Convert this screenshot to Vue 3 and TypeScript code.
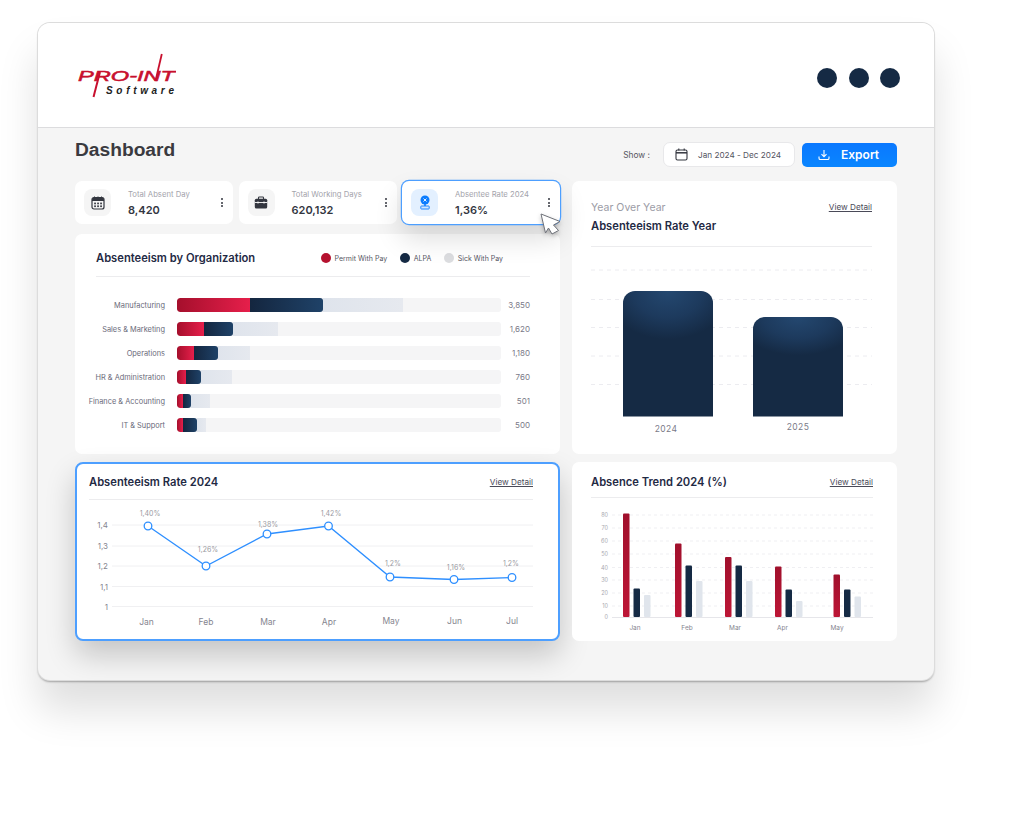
<template>
  <div class="page">
    <div class="window">
      <header class="topbar">
        <svg class="logo" width="100" height="46" viewBox="76 53 100 46" aria-label="PRO-INT Software">
          <text class="logo-main" x="78" y="81" textLength="97" lengthAdjust="spacingAndGlyphs">PRO-INT</text>
          <path d="M100 72 L93.500 97" stroke="#c8102e" stroke-width="2" fill="none" />
          <path d="M161.800 54 L155.500 81" stroke="#c8102e" stroke-width="1.800" fill="none" />
          <text class="logo-sub" x="106" y="94" textLength="68">Software</text>
        </svg>
        <div class="top-dots">
          <span v-for="d in 3" :key="d" class="top-dot" />
        </div>
      </header>

      <main class="content">
        <div class="page-head">
          <h1 class="page-title">Dashboard</h1>
          <div class="filters">
            <span class="show-label">Show :</span>
            <div class="date-box">
              <svg width="13" height="13" viewBox="0 0 13 13" fill="none" stroke="#33363f" stroke-width="1.100">
                <rect x="1" y="2" width="11" height="10" rx="1.500" />
                <path d="M1 4.800 H12" stroke-width="1.500" />
                <path d="M3.800 .5 V2.500 M9.200 .5 V2.500" />
              </svg>
              <span>Jan 2024 - Dec 2024</span>
            </div>
            <button class="export-btn" type="button">
              <svg width="12" height="12" viewBox="0 0 12 12" fill="none" stroke="#fff" stroke-width="1.100">
                <path d="M6 1 V7.500 M3.500 5.200 L6 7.800 L8.500 5.200" />
                <path d="M1 7.500 V9.200 Q1 10.500 2.300 10.500 H9.700 Q11 10.500 11 9.200 V7.500" />
              </svg>
              <span>Export</span>
            </button>
          </div>
        </div>

        <div class="grid">
          <div class="col-left">
            <div class="stats">
              <div v-for="s in stats" :key="s.title" class="stat" :class="{ active: s.active }">
                <div class="stat-icon">
                  <svg v-if="s.icon === 'calendar'" width="14" height="14" viewBox="0 0 14 14">
                    <rect x="1" y="1.500" width="12" height="11.500" rx="2" fill="none" stroke="#33363f" stroke-width="1.200" />
                    <path d="M1 3.500 Q1 1.500 3 1.500 H11 Q13 1.500 13 3.500 V5 H1 Z" fill="#33363f" />
                    <path d="M3.500 .5 V2 M7 .5 V2 M10.500 .5 V2" stroke="#33363f" stroke-width="1" />
                    <g fill="#33363f">
                      <rect x="3.200" y="6.600" width="1.700" height="1.700" />
                      <rect x="6.200" y="6.600" width="1.700" height="1.700" />
                      <rect x="9.200" y="6.600" width="1.700" height="1.700" />
                      <rect x="3.200" y="9.400" width="1.700" height="1.700" />
                      <rect x="6.200" y="9.400" width="1.700" height="1.700" />
                      <rect x="9.200" y="9.400" width="1.700" height="1.700" />
                    </g>
                  </svg>
                  <svg v-else-if="s.icon === 'briefcase'" width="14" height="14" viewBox="0 0 14 14">
                    <path d="M4.500 3 V1.800 Q4.500 1 5.300 1 H8.700 Q9.500 1 9.500 1.800 V3" fill="none" stroke="#33363f" stroke-width="1.100" />
                    <rect x=".8" y="2.800" width="12.400" height="9.700" rx="1.500" fill="#33363f" />
                    <path d="M.8 6.500 H13.200" stroke="#fff" stroke-width=".9" />
                    <path d="M4 5.500 V7.500 M10 5.500 V7.500" stroke="#fff" stroke-width="1" />
                  </svg>
                  <svg v-else width="14" height="16" viewBox="0 0 14 16">
                    <circle cx="7" cy="5" r="4.500" fill="#0a7cff" />
                    <path d="M5.500 3.500 L8.500 6.500 M8.500 3.500 L5.500 6.500" stroke="#fff" stroke-width=".9" />
                    <path d="M7 9 V11" stroke="#0a7cff" stroke-width="1.500" />
                    <rect x="2.800" y="11" width="8.400" height="3" rx=".6" fill="#d4e8ff" stroke="#0a7cff" stroke-width=".9" />
                  </svg>
                </div>
                <div class="stat-text">
                  <span class="stat-title">{{ s.title }}</span>
                  <span class="stat-value">{{ s.value }}</span>
                </div>
                <span class="kebab"><i /><i /><i /></span>
                <svg v-if="s.active" class="cursor" width="24" height="26" viewBox="0 0 24 26">
                  <path d="M1 1 L20 8.500 L13.500 12 L18.500 17.500 L12 21 L8.500 15 L5.500 20 Z" fill="#fff" stroke="#6d7078" stroke-width="1" stroke-linejoin="round" />
                </svg>
              </div>
            </div>

            <section class="card org-card">
              <div class="org-head">
                <h2 class="card-title">Absenteeism by Organization</h2>
                <ul class="legend">
                  <li v-for="l in legend" :key="l.label">
                    <span class="legend-dot" :style="{ background: l.color }" />{{ l.label }}
                  </li>
                </ul>
              </div>
              <div class="org-rows">
                <div v-for="r in orgRows" :key="r.name" class="org-row">
                  <span class="org-name">{{ r.name }}</span>
                  <div class="track">
                    <span class="seg seg-red" :style="{ width: segWidth(r.red) }" />
                    <span class="seg seg-navy" :style="{ width: segWidth(r.navy) }" />
                    <span class="seg seg-grey" :style="{ width: segWidth(r.grey) }" />
                  </div>
                  <span class="org-value">{{ r.value }}</span>
                </div>
              </div>
            </section>

            <section class="card line-card">
              <div class="card-head">
                <h2 class="card-title">Absenteeism Rate 2024</h2>
                <a class="detail">View Detail</a>
              </div>
              <svg class="chart" width="444" height="135" viewBox="89 500 444 135">
                <g v-for="g in lineGrid" :key="g.label">
                  <line x1="112" x2="533" :y1="g.y" :y2="g.y" stroke="#f0f0f2" stroke-width="1" />
                  <text class="tick" x="108" :y="g.y + 3" text-anchor="end">{{ g.label }}</text>
                </g>
                <polyline :points="linePoints" fill="none" stroke="#2e8fff" stroke-width="1.300" />
                <g v-for="p in lineData" :key="p.month">
                  <circle :cx="p.x" :cy="p.y" r="3.800" fill="#fff" stroke="#2e8fff" stroke-width="1.300" />
                  <text class="pt-label" :x="p.lx" :y="p.ly" text-anchor="middle">{{ p.label }}</text>
                  <text class="month" :x="p.mx" :y="p.my" text-anchor="middle">{{ p.month }}</text>
                </g>
              </svg>
            </section>
          </div>

          <div class="col-right">
            <section class="card year-card">
              <div class="year-head">
                <div>
                  <p class="eyebrow">Year Over Year</p>
                  <h2 class="card-title">Absenteeism Rate Year</h2>
                </div>
                <a class="detail">View Detail</a>
              </div>
              <svg class="chart" width="281" height="190" viewBox="591 247 281 190">
                <defs>
                  <radialGradient id="barGlow" cx=".5" cy="0" r=".7" gradientTransform="translate(.5 0) scale(1 .55) translate(-.5 0)">
                    <stop offset="0" stop-color="#244870" />
                    <stop offset=".55" stop-color="#1d3a5d" />
                    <stop offset="1" stop-color="#152a44" />
                  </radialGradient>
                </defs>
                <line v-for="y in yearGrid" :key="y" x1="591" x2="872" :y1="y" :y2="y" stroke="#ececf0" stroke-dasharray="4 4" />
                <path d="M623 416.500 V303 a12 12 0 0 1 12 -12 H701 a12 12 0 0 1 12 12 V416.500 Z" fill="url(#barGlow)" />
                <path d="M753 416.500 V329 a12 12 0 0 1 12 -12 H831 a12 12 0 0 1 12 12 V416.500 Z" fill="url(#barGlow)" />
                <text class="year-label" x="666" y="432" text-anchor="middle">2024</text>
                <text class="year-label" x="798" y="430" text-anchor="middle">2025</text>
              </svg>
            </section>

            <section class="card trend-card">
              <div class="card-head trend-head">
                <h2 class="card-title">Absence Trend 2024 (%)</h2>
                <a class="detail">View Detail</a>
              </div>
              <svg class="chart" width="282" height="137" viewBox="591 498 282 137">
                <defs>
                  <linearGradient id="redBar" x1="0" y1="0" x2="0" y2="1">
                    <stop offset="0" stop-color="#a0102c" />
                    <stop offset="1" stop-color="#bd1636" />
                  </linearGradient>
                </defs>
                <g v-for="t in trendTicks" :key="t.label">
                  <line v-if="t.label !== '0'" x1="612" x2="873" :y1="t.y" :y2="t.y" stroke="#efeff2" stroke-dasharray="3 3" />
                  <text class="tiny" x="608" :y="t.y + 2" text-anchor="end">{{ t.label }}</text>
                </g>
                <line x1="612" x2="873" y1="617.500" y2="617.500" stroke="#e6e6ea" />
                <g v-for="b in trendBars" :key="b.month">
                  <rect :x="b.x" :y="b.red" width="6.500" :height="617 - b.red" rx="1" fill="url(#redBar)" />
                  <rect :x="b.x + 10.500" :y="b.navy" width="6.500" :height="617 - b.navy" rx="1" fill="#152a44" />
                  <rect :x="b.x + 21" :y="b.grey" width="6.500" :height="617 - b.grey" rx="1" fill="#e0e5ec" />
                  <text class="tiny-month" :x="b.lx" y="630" text-anchor="middle">{{ b.month }}</text>
                </g>
              </svg>
            </section>
          </div>
        </div>
      </main>
    </div>
  </div>
</template>

<script setup lang="ts">
import { computed } from 'vue';

interface Stat {
  title: string;
  value: string;
  icon: 'calendar' | 'briefcase' | 'badge';
  active?: boolean;
}

const stats: Stat[] = [
  { title: 'Total Absent Day', value: '8,420', icon: 'calendar' },
  { title: 'Total Working Days', value: '620,132', icon: 'briefcase' },
  { title: 'Absentee Rate 2024', value: '1,36%', icon: 'badge', active: true }
];

const legend = [
  { label: 'Permit With Pay', color: '#b5122f' },
  { label: 'ALPA', color: '#152a44' },
  { label: 'Sick With Pay', color: '#dcdde0' }
];

// segment sizes are px measured on a 324px track
const TRACK = 324;
const orgRows = [
  { name: 'Manufacturing', red: 73, navy: 73, grey: 80, value: '3,850' },
  { name: 'Sales & Marketing', red: 27, navy: 29, grey: 45, value: '1,620' },
  { name: 'Operations', red: 17, navy: 24, grey: 32, value: '1,180' },
  { name: 'HR & Administration', red: 9, navy: 15, grey: 31, value: '760' },
  { name: 'Finance & Accounting', red: 6, navy: 8, grey: 19, value: '501' },
  { name: 'IT & Support', red: 6, navy: 14, grey: 9, value: '500' }
];

function segWidth(px: number) {
  return `${(px / TRACK) * 100}%`;
}

const lineGrid = [
  { label: '1,4', y: 525 },
  { label: '1,3', y: 546 },
  { label: '1,2', y: 566 },
  { label: '1,1', y: 586.5 },
  { label: '1', y: 606.5 }
];

const lineData = [
  { month: 'Jan', x: 148, y: 526, label: '1,40%', lx: 150, ly: 516, mx: 146.5, my: 625 },
  { month: 'Feb', x: 206, y: 566, label: '1,26%', lx: 208, ly: 552, mx: 206, my: 625 },
  { month: 'Mar', x: 267, y: 534, label: '1,38%', lx: 268, ly: 527, mx: 268, my: 625 },
  { month: 'Apr', x: 328.5, y: 526, label: '1,42%', lx: 331, ly: 516, mx: 329, my: 625 },
  { month: 'May', x: 390, y: 577, label: '1,2%', lx: 393, ly: 566, mx: 391, my: 624 },
  { month: 'Jun', x: 454, y: 579.5, label: '1,16%', lx: 456, ly: 570, mx: 454.5, my: 624 },
  { month: 'Jul', x: 512, y: 577.5, label: '1,2%', lx: 511, ly: 566, mx: 512, my: 624 }
];

const linePoints = computed(() => lineData.map((p) => `${p.x},${p.y}`).join(' '));

const yearGrid = [270, 299.5, 327.5, 356, 384.5];

const trendTicks = [
  { label: '80', y: 515 },
  { label: '70', y: 528 },
  { label: '60', y: 541 },
  { label: '50', y: 554 },
  { label: '40', y: 567.5 },
  { label: '30', y: 580 },
  { label: '20', y: 593 },
  { label: '10', y: 606 },
  { label: '0', y: 617 }
];

const trendBars = [
  { month: 'Jan', x: 623, red: 513.5, navy: 588.5, grey: 595, lx: 635 },
  { month: 'Feb', x: 675, red: 543.5, navy: 565.5, grey: 581, lx: 687 },
  { month: 'Mar', x: 725, red: 557, navy: 565.5, grey: 581, lx: 735 },
  { month: 'Apr', x: 775, red: 566.5, navy: 589.5, grey: 601, lx: 782.5 },
  { month: 'May', x: 833.5, red: 574.5, navy: 589.5, grey: 596.5, lx: 837 }
];
</script>

<style>
html,
body {
  background: #fff;
}
</style>

<style scoped>
.page {
  box-sizing: border-box;
  height: 836px;
  padding: 23px 0 0 38px;
  overflow: hidden;
}

.window {
  box-sizing: border-box;
  width: 896px;
  height: 657px;
  border-radius: 12px;
  background: #f5f5f5;
  font-family: Inter, 'Liberation Sans', sans-serif;
  color: #1f2a44;
  box-shadow:
    0 0 0 1px #dcdcdc,
    0 2px 2px rgba(0, 0, 0, .3),
    0 30px 40px rgba(0, 0, 0, .13);
}

.topbar {
  box-sizing: border-box;
  height: 105px;
  display: flex;
  align-items: flex-start;
  justify-content: space-between;
  padding: 30px 34px 0 38px;
  background: #fff;
  border-bottom: 1px solid #dcdcde;
  border-radius: 12px 12px 0 0;
}

.logo {
  display: block;
}
.logo-main {
  font-family: 'Liberation Sans', sans-serif;
  font-style: italic;
  font-size: 14.500px;
  fill: #c8102e;
  stroke: #c8102e;
  stroke-width: .5px;
}
.logo-sub {
  font-family: 'Liberation Sans', sans-serif;
  font-style: italic;
  font-weight: 700;
  font-size: 10px;
  fill: #222;
}

.top-dots {
  display: flex;
  gap: 11.500px;
  margin-top: 15px;
}
.top-dot {
  width: 20px;
  height: 20px;
  border-radius: 50%;
  background: #152a44;
}

.content {
  padding: 0 37px;
}

.page-head {
  display: flex;
  align-items: flex-start;
  justify-content: space-between;
  height: 53px;
}
.page-title {
  margin: 10px 0 0;
  font-family: 'Liberation Sans', sans-serif;
  font-size: 19.200px;
  line-height: 24px;
  font-weight: 700;
  color: #3a3a3f;
}

.filters {
  display: flex;
  align-items: center;
  margin-top: 14px;
}
.show-label {
  font-size: 8.400px;
  color: #55555f;
  margin-right: 13px;
}
.date-box {
  box-sizing: border-box;
  width: 132px;
  height: 25px;
  display: flex;
  align-items: center;
  gap: 10px;
  padding-left: 11px;
  background: #fff;
  border: 1px solid #e8e8ea;
  border-radius: 7px;
  font-size: 8.200px;
  color: #55555f;
  margin-right: 7px;
}
.export-btn {
  width: 95px;
  height: 24px;
  display: flex;
  align-items: center;
  gap: 11px;
  padding: 0 0 0 16px;
  border: 0;
  border-radius: 5px;
  background: linear-gradient(180deg, #0a78ff, #0a86ff);
  color: #fff;
  font-family: inherit;
  font-size: 12px;
  font-weight: 600;
}

.grid {
  display: grid;
  grid-template-columns: 485px 325px;
  gap: 12px;
}
.col-left,
.col-right {
  display: flex;
  flex-direction: column;
}

.stats {
  display: flex;
  gap: 5.500px;
  margin-bottom: 10px;
}
.stat {
  position: relative;
  box-sizing: border-box;
  flex: 1 1 0;
  height: 43px;
  display: flex;
  align-items: center;
  padding: 0 10px 0 9px;
  background: #fff;
  border-radius: 7px;
}
.stat.active {
  box-shadow:
    0 0 0 1.200px #4d9fff,
    0 14px 28px rgba(0, 0, 0, .14);
  z-index: 2;
}
.stat-icon {
  width: 27px;
  height: 27px;
  flex: none;
  display: flex;
  align-items: center;
  justify-content: center;
  border-radius: 8px;
  background: #f5f5f5;
}
.stat.active .stat-icon {
  background: #e3f0ff;
}
.stat-text {
  display: flex;
  flex-direction: column;
  margin-left: 17px;
  flex: 1;
  padding-top: 1px;
}
.stat-title {
  font-size: 7.700px;
  line-height: 11px;
  color: #a3a3ab;
}
.stat-value {
  margin-top: 3px;
  font-size: 11px;
  line-height: 14px;
  font-weight: 600;
  color: #33363f;
}
.kebab {
  display: flex;
  flex-direction: column;
  gap: 1.500px;
}
.kebab i {
  width: 2px;
  height: 2px;
  border-radius: 50%;
  background: #33363f;
}
.cursor {
  position: absolute;
  left: 138px;
  top: 32px;
  filter: drop-shadow(0 2px 2px rgba(0, 0, 0, .25));
}

.card {
  box-sizing: border-box;
  background: #fff;
  border-radius: 7px;
}
.card-title {
  margin: 0;
  font-size: 11.200px;
  line-height: 14px;
  font-weight: 600;
  color: #1f2a44;
}
.card-head {
  display: flex;
  align-items: center;
  justify-content: space-between;
}
.detail {
  font-size: 8.200px;
  line-height: 14px;
  color: #4a4a58;
  text-decoration: underline;
}
.chart {
  display: block;
}

.org-card {
  height: 220px;
  padding: 16px 30px 0 21px;
}
.org-head {
  display: flex;
  align-items: center;
  height: 16px;
  padding-bottom: 10px;
  border-bottom: 1px solid #ececee;
}
.legend {
  display: flex;
  align-items: center;
  gap: 12.500px;
  list-style: none;
  margin: 0 27px 0 auto;
  padding: 0;
  font-size: 7px;
  color: #55555f;
}
.legend li {
  display: flex;
  align-items: center;
  gap: 4px;
}
.legend-dot {
  width: 10px;
  height: 10px;
  border-radius: 50%;
}

.org-rows {
  display: flex;
  flex-direction: column;
  gap: 10px;
  margin: 21px 0 0 -10px;
}
.org-row {
  display: grid;
  grid-template-columns: 79px 12px 324px 8px 21px;
  align-items: center;
  height: 14px;
}
.org-name {
  grid-column: 1;
  justify-self: end;
  white-space: nowrap;
  font-size: 7.400px;
  color: #6a6a7a;
}
.track {
  grid-column: 3;
  display: flex;
  height: 14px;
  border-radius: 3px;
  background: #f5f5f6;
  overflow: hidden;
}
.seg {
  height: 100%;
}
.seg-red {
  background: linear-gradient(90deg, #a50f2c, #e61f4b);
  border-radius: 3px 0 0 3px;
}
.seg-navy {
  background: linear-gradient(90deg, #14263f, #1f4268);
  border-radius: 0 3px 3px 0;
}
.seg-grey {
  background: linear-gradient(90deg, #dfe4ec, #e6e9ef);
}
.org-value {
  grid-column: 5;
  justify-self: end;
  font-size: 8px;
  color: #7a7a88;
}

.line-card {
  height: 179px;
  margin-top: 8px;
  padding: 11px 25px 0 12px;
  border: 2px solid #4d9fff;
  border-radius: 8px;
  box-shadow: 0 14px 30px rgba(0, 0, 0, .2);
}
.line-card .card-head {
  padding-bottom: 10px;
  border-bottom: 1px solid #ececee;
}
.tick {
  font-size: 8px;
  fill: #85858f;
}
.pt-label {
  font-size: 7px;
  fill: #9a9aa2;
}
.month {
  font-size: 8.500px;
  fill: #85858f;
}

.year-card {
  height: 273px;
  padding: 19px 25px 0 19px;
}
.year-head {
  display: flex;
  align-items: flex-start;
  justify-content: space-between;
  height: 46px;
  border-bottom: 1px solid #ececee;
}
.eyebrow {
  margin: 0 0 5px;
  padding-top: 1px;
  font-size: 10.500px;
  line-height: 13px;
  color: #9c9ca6;
}
.year-label {
  font-size: 8.500px;
  letter-spacing: .4px;
  fill: #7a7a88;
}

.trend-card {
  height: 179px;
  margin-top: 8px;
  padding: 13px 24px 0 19px;
}
.trend-head {
  padding-bottom: 8px;
  border-bottom: 1px solid #ececee;
}
.tiny {
  font-size: 5.500px;
  fill: #a8a8b0;
}
.tiny-month {
  font-size: 6.500px;
  fill: #85858f;
}
</style>
